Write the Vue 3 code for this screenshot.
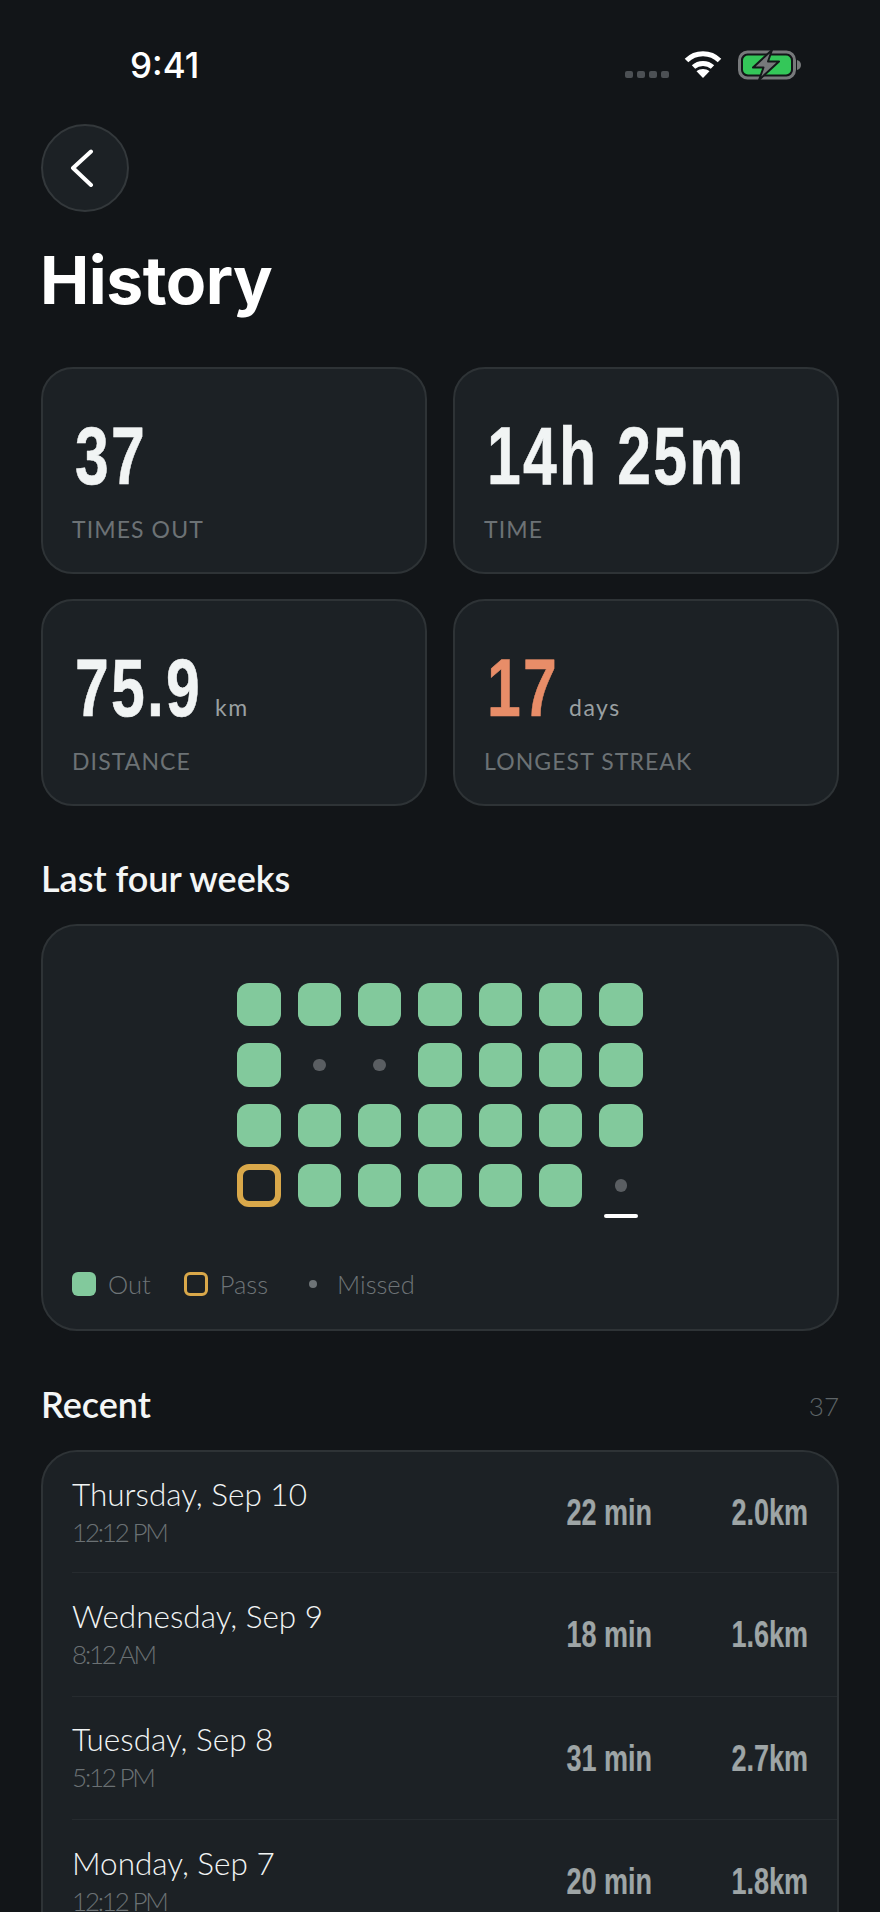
<template>
  <div class="screen">
    <div class="status-bar">
      <span class="clock">9:41</span>
      <div class="status-icons">
        <div class="signal"><i v-for="n in 4" :key="n"></i></div>
        <svg class="wifi" viewBox="0 0 38 28" fill="none" stroke="#fff" stroke-width="5">
          <path d="M2.5 10.5C11.5 1.5 26.5 1.5 35.5 10.5" />
          <path d="M9.5 17C14.8 12.2 23.2 12.2 28.5 17" />
          <path d="M19 28l-6.5-6.8c3.6-3 9.4-3 13 0z" fill="#fff" stroke="none" />
        </svg>
        <svg class="battery" viewBox="0 0 64 30">
          <rect x="1.5" y="2" width="55" height="26" rx="8" fill="none" stroke="#77797b" stroke-width="3" />
          <rect x="5" y="5.5" width="48" height="19" rx="5" fill="#34c759" />
          <path d="M59 10c2.500.6 4 2.600 4 5s-1.500 4.400-4 5z" fill="#77797b" />
          <path d="M34 0L15 17.500h10.500L21 30l20-18.500H30z" fill="#77797b" stroke="#14181a" stroke-width="2" stroke-linejoin="round" />
        </svg>
      </div>
    </div>

    <button class="back">
      <svg viewBox="0 0 24 38" fill="none" stroke="#fff" stroke-width="4" stroke-linecap="round" stroke-linejoin="round">
        <path d="M21 2.500L3 19l18 17" />
      </svg>
    </button>

    <h1 class="title">History</h1>

    <div class="stats">
      <div v-for="s in stats" :key="s.label" class="card stat">
        <div class="stat-value">
          <span class="stat-box" :style="{ width: s.width + 'px' }">
            <span class="stat-num" :class="{ accent: s.accent }">{{ s.value }}</span>
          </span>
          <span v-if="s.unit" class="stat-unit">{{ s.unit }}</span>
        </div>
        <div class="stat-label">{{ s.label }}</div>
      </div>
    </div>

    <h2 class="section-title weeks-title">Last four weeks</h2>
    <div class="card chart">
      <div class="grid">
        <div v-for="(c, i) in cells" :key="i" class="cell" :class="c">
          <span v-if="c === 'miss' || c === 'today'" class="dot"></span>
          <span v-if="c === 'today'" class="today-bar"></span>
        </div>
      </div>
      <div class="legend">
        <div class="legend-item"><span class="key key-out"></span>Out</div>
        <div class="legend-item"><span class="key key-pass"></span>Pass</div>
        <div class="legend-item"><span class="key key-miss"><i></i></span>Missed</div>
      </div>
    </div>

    <div class="recent-head">
      <h2 class="section-title">Recent</h2>
      <span class="recent-count">37</span>
    </div>
    <div class="card list">
      <div v-for="r in recent" :key="r.day" class="row">
        <div class="row-when">
          <div class="row-day">{{ r.day }}</div>
          <div class="row-time">{{ r.time }}</div>
        </div>
        <span class="row-val">{{ r.mins }}</span>
        <span class="row-val row-dist">{{ r.dist }}</span>
      </div>
    </div>
  </div>
</template>

<script setup>
// no condensed face is installed, so the big numbers are squeezed in css
// and width holds the space each one takes after the squeeze
const stats = [
  { value: '37', width: 70, label: 'TIMES OUT' },
  { value: '14h 25m', width: 257, label: 'TIME' },
  { value: '75.9', width: 128, unit: 'km', label: 'DISTANCE' },
  { value: '17', width: 70, unit: 'days', label: 'LONGEST STREAK', accent: true }
]

const cells = [
  'out', 'out', 'out', 'out', 'out', 'out', 'out',
  'out', 'miss', 'miss', 'out', 'out', 'out', 'out',
  'out', 'out', 'out', 'out', 'out', 'out', 'out',
  'pass', 'out', 'out', 'out', 'out', 'out', 'today'
]

const recent = [
  { day: 'Thursday, Sep 10', time: '12:12 PM', mins: '22 min', dist: '2.0km' },
  { day: 'Wednesday, Sep 9', time: '8:12 AM', mins: '18 min', dist: '1.6km' },
  { day: 'Tuesday, Sep 8', time: '5:12 PM', mins: '31 min', dist: '2.7km' },
  { day: 'Monday, Sep 7', time: '12:12 PM', mins: '20 min', dist: '1.8km' }
]
</script>

<style>
body {
  background: #121518;
}
</style>

<style scoped>
.screen {
  width: 880px;
  height: 1912px;
  overflow: hidden;
  box-sizing: border-box;
  padding: 0 41px;
  background: #121518;
  color: #f1f4f4;
  font-family: Lato, "Noto Sans", sans-serif;
}

.status-bar {
  height: 124px;
  display: flex;
  justify-content: space-between;
  padding: 46px 37px 0 89px;
  box-sizing: border-box;
}

.clock {
  font-family: Inter, sans-serif;
  font-size: 35px;
  font-weight: 500;
  line-height: 38px;
  color: #fff;
}

.status-icons {
  display: flex;
  align-items: flex-start;
  padding-top: 4px;
}

.signal {
  display: flex;
  gap: 4px;
  margin: 21px 15px 0 0;
}

.signal i {
  width: 8px;
  height: 7px;
  border-radius: 2px;
  background: #4c5054;
}

.wifi {
  width: 38px;
  height: 28px;
  margin-right: 16px;
}

.battery {
  width: 64px;
  height: 30px;
}

.back {
  display: flex;
  align-items: center;
  justify-content: center;
  width: 88px;
  height: 88px;
  padding: 0 6px 0 0;
  border: 2px solid #33383b;
  border-radius: 50%;
  background: #1c2125;
}

.back svg {
  width: 24px;
  height: 38px;
}

.title {
  margin: 30px 0 0 -1px;
  font-family: Inter, sans-serif;
  font-size: 66px;
  font-weight: 700;
  line-height: 76px;
  letter-spacing: -0.5px;
  color: #fff;
}

.card {
  box-sizing: border-box;
  border: 2px solid #2e3336;
  background: #1c2125;
}

.stats {
  display: grid;
  grid-template-columns: 1fr 1fr;
  gap: 25px 26px;
  margin-top: 49px;
}

.stat {
  height: 207px;
  padding: 46px 29px 0;
  border-radius: 32px;
}

.stat-value {
  display: flex;
  align-items: baseline;
  height: 82px;
}

.stat-box {
  display: inline-block;
  margin-left: 3px;
  white-space: nowrap;
}

.stat-num {
  display: inline-block;
  transform: scaleX(0.74);
  transform-origin: left center;
  font-family: "Liberation Sans", sans-serif;
  font-size: 82px;
  font-weight: 700;
  line-height: 82px;
  letter-spacing: 3px;
  -webkit-text-stroke: 0.6px currentColor;
}

.stat-num.accent {
  color: #e88d68;
}

.stat-unit {
  margin-left: 12px;
  font-size: 23px;
  letter-spacing: 1.500px;
  color: #9aa0a2;
}

.stat-label {
  margin-top: 18px;
  font-size: 23px;
  line-height: 28px;
  letter-spacing: 1.100px;
  color: #6c7275;
}

.section-title {
  margin: 0;
  font-size: 36px;
  font-weight: 600;
  line-height: 42px;
  color: #f4f6f6;
}

.weeks-title {
  margin-top: 51px;
}

.chart {
  height: 407px;
  margin-top: 25px;
  padding: 57px 29px 0;
  border-radius: 36px;
}

.grid {
  display: grid;
  grid-template-columns: repeat(7, 43.400px);
  grid-auto-rows: 43.400px;
  gap: 16.900px;
  justify-content: center;
}

.cell {
  position: relative;
  display: flex;
  align-items: center;
  justify-content: center;
  box-sizing: border-box;
  border-radius: 12px;
}

.cell.out {
  background: #82c99c;
}

.cell.pass {
  border: 6.500px solid #d9a84a;
}

.dot {
  width: 12.500px;
  height: 12.500px;
  border-radius: 50%;
  background: #5a5e62;
}

.today-bar {
  position: absolute;
  left: 5px;
  right: 5px;
  bottom: -11px;
  height: 4.500px;
  border-radius: 2px;
  background: #fff;
}

.legend {
  display: flex;
  gap: 33px;
  margin-top: 64px;
  font-size: 25.500px;
  font-weight: 300;
  line-height: 26px;
  color: #6e7477;
}

.legend-item {
  display: flex;
  align-items: center;
  gap: 12px;
}

.key {
  display: flex;
  align-items: center;
  justify-content: center;
  box-sizing: border-box;
  width: 24px;
  height: 24px;
  border-radius: 6px;
}

.key-out {
  background: #82c99c;
}

.key-pass {
  border: 3.500px solid #d9a84a;
}

.key-miss i {
  width: 8px;
  height: 8px;
  border-radius: 50%;
  background: #6e7477;
}

.recent-head {
  display: flex;
  justify-content: space-between;
  align-items: flex-end;
  margin-top: 52px;
}

.recent-count {
  font-size: 26px;
  font-weight: 300;
  line-height: 38px;
  color: #5e6467;
}

.list {
  height: 600px;
  margin-top: 25px;
  border-radius: 36px;
  padding-left: 29px;
}

.row {
  display: flex;
  align-items: center;
  height: 123.500px;
  box-sizing: border-box;
  padding-right: 29px;
  border-bottom: 1.500px solid #262b2f;
}

.row:first-child {
  height: 121px;
}

.row-when {
  flex: 1;
  padding-bottom: 3px;
}

.row-day {
  margin-bottom: 4px;
  font-size: 31.500px;
  font-weight: 300;
  line-height: 38px;
  color: #f1f4f4;
}

.row-time {
  font-size: 26px;
  font-weight: 300;
  line-height: 30px;
  letter-spacing: -2.200px;
  color: #6b7174;
}

.row-val {
  display: inline-block;
  transform: scaleX(0.75);
  transform-origin: right center;
  white-space: nowrap;
  font-family: "Liberation Sans", sans-serif;
  font-size: 36px;
  font-weight: 700;
  color: #9ea5a6;
  padding-top: 2px;
  -webkit-text-stroke: 0.2px currentColor;
}

.row-dist {
  width: 156px;
  text-align: right;
}
</style>
